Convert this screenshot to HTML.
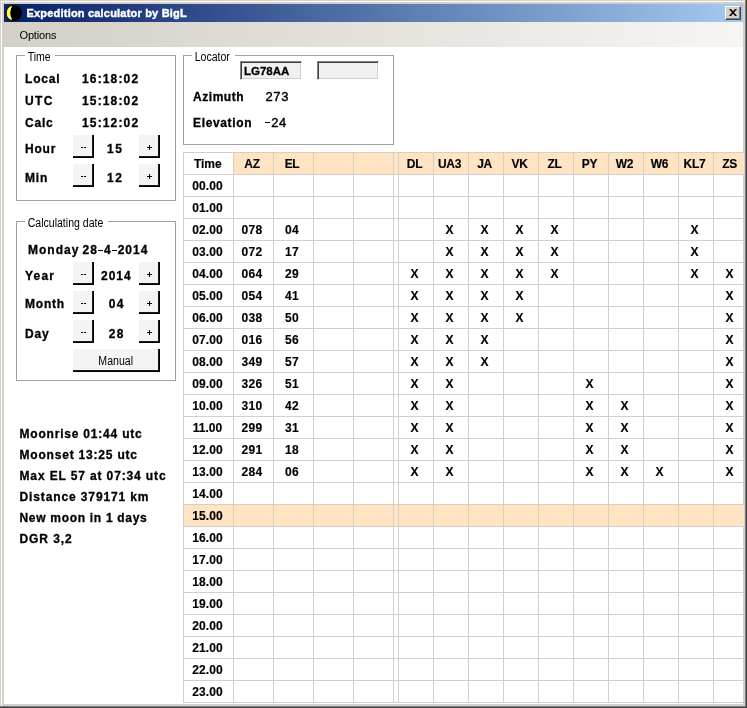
<!DOCTYPE html>
<html><head><meta charset="utf-8"><title>Expedition calculator by BigL</title>
<style>
*{box-sizing:border-box;margin:0;padding:0}
html,body{width:747px;height:708px;overflow:hidden;background:#fff}
body{position:relative;font-family:"Liberation Sans",sans-serif;color:#000}
.abs,.win div,.win span{position:absolute}
.win{position:absolute;left:0;top:0;width:747px;height:708px;background:#d4d0c8;overflow:hidden}
.lay{left:0;top:0;width:747px;height:708px;will-change:transform}
.client{left:4px;top:47px;width:739px;height:657px;background:#fff}
.title{left:4px;top:4px;width:739px;height:18px;background:linear-gradient(90deg,#0a246a 0%,#0a246a 3%,#a6caf0 100%)}
.title .tt{left:22.5px;top:2px;font-weight:bold;font-size:11px;line-height:14px;color:#fff;white-space:nowrap;letter-spacing:0.2px;-webkit-text-stroke:0.4px #fff}
.menu{left:4px;top:22px;width:739px;height:25px;background:linear-gradient(90deg,#d4d0c8 0%,#d5d1c9 5%,#f6f5f3 100%)}
.menu .mi{left:15.5px;top:6px;font-size:11px;line-height:14px;white-space:nowrap;letter-spacing:-0.15px}
.closeb{left:721px;top:2px;width:16px;height:14px;background:#d4d0c8;border:1px solid;border-color:#fff #404040 #404040 #fff;box-shadow:inset -1px -1px 0 #808080}
/* group boxes */
.gb{border:1px solid #a0a0a0}
.cap{background:#fff;font-size:12px;line-height:13px;white-space:nowrap;padding:0 2px;transform:scaleX(0.88);transform-origin:0 0}
.b{font-weight:bold;font-size:12px;line-height:14px;white-space:nowrap;letter-spacing:0.8px;-webkit-text-stroke:0.3px #000}
.n{font-weight:normal;font-size:13px;-webkit-text-stroke:0.4px #000}
.b u{display:inline-block;width:5px;height:1.3px;background:#000;vertical-align:3px;margin-right:1px;text-decoration:none}
.btn{background:#f4f4f4;border-right:1px solid #000;border-bottom:1px solid #000;box-shadow:inset -1px -1px 0 #1a1a1a;font-size:12px;text-align:center}
.btn b{position:absolute;background:#000}
.btn i{display:inline-block;font-style:normal;transform:scaleX(0.88)}
.btn span{position:static !important}
.inp{background:#f0f0f0;border:1px solid;border-color:#808080 #fff #fff #808080;box-shadow:inset 1px 1px 0 #404040, inset -1px -1px 0 #d4d0c8}
/* grid */
.grid{left:183px;top:152px;width:561px;height:551px;overflow:hidden}
.pe{background:#ffe4c4}
.hl{left:0;width:561px;height:1px;background:#d4d0c8}
.vl{top:0;width:1px;height:551px;background:#d4d0c8}
.d{letter-spacing:0.35px}
.d0{letter-spacing:0.05px}
.x{font-size:11.5px}
.h{letter-spacing:-0.3px}
.t{-webkit-text-stroke:0.15px #000;height:21px;line-height:21px;font-size:12px;font-weight:bold;text-align:center;white-space:nowrap}
</style></head><body>
<div class="win"><div class="lay">
 <div style="left:1px;top:1px;width:744px;height:705px;border-left:1px solid #fff;border-top:1px solid #fff"></div>
 <div style="left:0;top:0;width:747px;height:708px;border-right:1px solid #404040;border-bottom:1px solid #404040"></div>
 <div style="left:0;top:0;width:746px;height:707px;border-right:1px solid #808080;border-bottom:1px solid #808080"></div>
 <div class="title">
  <svg style="position:absolute;left:2px;top:1px" width="16" height="16" viewBox="0 0 16 16"><circle cx="8" cy="8" r="8" fill="#000"/><path d="M6.2 0.85 A7.4 7.4 0 0 0 6.2 15.15 A14.4 14.4 0 0 1 6.2 0.85Z" fill="#ffff30"/><path d="M5.2 2.2 A12 12 0 0 0 5.2 13.8" fill="none" stroke="#fff" stroke-width="0.7" opacity="0.7"/></svg>
  <div class="tt">Expedition calculator by BigL</div>
  <div class="closeb"><svg style="position:absolute;left:3px;top:2px" width="8" height="7" viewBox="0 0 8 7"><path d="M0 0h2l2 2.2L6 0h2L5 3.5 8 7H6L4 4.8 2 7H0l3-3.5z" fill="#000"/></svg></div>
 </div>
 <div class="menu"><div class="mi">Options</div></div>
 <div class="client">
 </div>

 <!-- Time group -->
 <div class="gb" style="left:16px;top:55px;width:160px;height:146px"></div>
 <div class="cap" style="left:25px;top:51px;padding:0 5px 0 3px">Time</div>
 <div class="b" style="left:25px;top:72px">Local</div>
 <div class="b" style="left:82px;top:72px;letter-spacing:1.15px">16:18:02</div>
 <div class="b" style="left:25px;top:94px;letter-spacing:1.4px">UTC</div>
 <div class="b" style="left:82px;top:94px;letter-spacing:1.15px">15:18:02</div>
 <div class="b" style="left:25px;top:116px">Calc</div>
 <div class="b" style="left:82px;top:116px;letter-spacing:1.15px">15:12:02</div>
 <div class="b" style="left:25px;top:142px">Hour</div>
 <div class="b" style="left:25px;top:171px">Min</div>
 <div class="btn" style="left:73px;top:135px;width:21px;height:23px;"><b style="left:8px;top:12px;width:2px;height:1px"></b><b style="left:11px;top:12px;width:2px;height:1px"></b></div>
 <div class="b" style="left:107px;top:142px;letter-spacing:1.6px">15</div>
 <div class="btn" style="left:139px;top:135px;width:21px;height:23px;"><b style="left:8px;top:12px;width:5px;height:1px"></b><b style="left:10px;top:10px;width:1px;height:5px"></b></div>
 <div class="btn" style="left:73px;top:164px;width:21px;height:23px;"><b style="left:8px;top:12px;width:2px;height:1px"></b><b style="left:11px;top:12px;width:2px;height:1px"></b></div>
 <div class="b" style="left:107px;top:171px;letter-spacing:1.6px">12</div>
 <div class="btn" style="left:139px;top:164px;width:21px;height:23px;"><b style="left:8px;top:12px;width:5px;height:1px"></b><b style="left:10px;top:10px;width:1px;height:5px"></b></div>

 <!-- Date group -->
 <div class="gb" style="left:16px;top:221px;width:160px;height:160px"></div>
 <div class="cap" style="left:25px;top:217px;padding:0 5px 0 3px">Calculating date</div>
 <div class="b" style="left:28px;top:243px;letter-spacing:1px">Monday <span style="position:static;margin-left:-1.1px">28<u></u>4<u></u>2014</span></div>
 <div class="b" style="left:25px;top:269px;letter-spacing:1.2px">Year</div>
 <div class="b" style="left:25px;top:297px">Month</div>
 <div class="b" style="left:25px;top:327px">Day</div>
 <div class="btn" style="left:73px;top:262px;width:21px;height:23px;"><b style="left:8px;top:12px;width:2px;height:1px"></b><b style="left:11px;top:12px;width:2px;height:1px"></b></div>
 <div class="b" style="left:101px;top:269px;letter-spacing:1px">2014</div>
 <div class="btn" style="left:139px;top:262px;width:21px;height:23px;"><b style="left:8px;top:12px;width:5px;height:1px"></b><b style="left:10px;top:10px;width:1px;height:5px"></b></div>
 <div class="btn" style="left:73px;top:291px;width:21px;height:23px;"><b style="left:8px;top:12px;width:2px;height:1px"></b><b style="left:11px;top:12px;width:2px;height:1px"></b></div>
 <div class="b" style="left:108.7px;top:297px;letter-spacing:1.5px">04</div>
 <div class="btn" style="left:139px;top:291px;width:21px;height:23px;"><b style="left:8px;top:12px;width:5px;height:1px"></b><b style="left:10px;top:10px;width:1px;height:5px"></b></div>
 <div class="btn" style="left:73px;top:320px;width:21px;height:23px;"><b style="left:8px;top:12px;width:2px;height:1px"></b><b style="left:11px;top:12px;width:2px;height:1px"></b></div>
 <div class="b" style="left:108.7px;top:327px;letter-spacing:1.5px">28</div>
 <div class="btn" style="left:139px;top:320px;width:21px;height:23px;"><b style="left:8px;top:12px;width:5px;height:1px"></b><b style="left:10px;top:10px;width:1px;height:5px"></b></div>
 <div class="btn" style="left:73px;top:349px;width:87px;height:23px;line-height:24px"><i>Manual</i></div>

 <!-- info -->
 <div class="b" style="left:19.5px;top:427px">Moonrise 01:44 utc</div>
 <div class="b" style="left:19.5px;top:448px">Moonset 13:25 utc</div>
 <div class="b" style="left:19.5px;top:469px;letter-spacing:0.87px">Max EL 57 at 07:34 utc</div>
 <div class="b" style="left:19.5px;top:490px;letter-spacing:0.88px">Distance 379171 km</div>
 <div class="b" style="left:19.5px;top:511px;letter-spacing:0.7px">New moon in 1 days</div>
 <div class="b" style="left:19.5px;top:532px;letter-spacing:0.93px">DGR 3,2</div>

 <!-- Locator group -->
 <div class="gb" style="left:183px;top:55px;width:211px;height:90px"></div>
 <div class="cap" style="left:192px;top:51px;padding:0 6px 0 3px">Locator</div>
 <div class="inp" style="left:240px;top:61px;width:62px;height:19px"></div>
 <div class="b" style="left:244px;top:64px;font-size:11.5px;letter-spacing:0">LG78AA</div>
 <div class="inp" style="left:317px;top:61px;width:62px;height:19px"></div>
 <div class="b" style="left:193px;top:90px;letter-spacing:0.55px">Azimuth</div>
 <div class="b n" style="left:265.5px;top:90px;letter-spacing:0.6px">273</div>
 <div class="b" style="left:193px;top:116px;letter-spacing:0.65px">Elevation</div>
 <div style="left:265px;top:122px;width:5px;height:1px;background:#000"></div>
 <div class="b n" style="left:264.7px;top:116px;letter-spacing:0.6px"><span style="position:static;display:inline-block;width:5px;height:0;margin-right:1.5px"></span>24</div>

 <div class="grid">
<div class="pe" style="left:50px;top:0;width:511px;height:22px"></div>
<div class="pe" style="left:0;top:352px;width:561px;height:22px"></div>
<div class="hl" style="top:0px"></div>
<div class="hl" style="top:22px"></div>
<div class="hl" style="top:44px"></div>
<div class="hl" style="top:66px"></div>
<div class="hl" style="top:88px"></div>
<div class="hl" style="top:110px"></div>
<div class="hl" style="top:132px"></div>
<div class="hl" style="top:154px"></div>
<div class="hl" style="top:176px"></div>
<div class="hl" style="top:198px"></div>
<div class="hl" style="top:220px"></div>
<div class="hl" style="top:242px"></div>
<div class="hl" style="top:264px"></div>
<div class="hl" style="top:286px"></div>
<div class="hl" style="top:308px"></div>
<div class="hl" style="top:330px"></div>
<div class="hl" style="top:352px"></div>
<div class="hl" style="top:374px"></div>
<div class="hl" style="top:396px"></div>
<div class="hl" style="top:418px"></div>
<div class="hl" style="top:440px"></div>
<div class="hl" style="top:462px"></div>
<div class="hl" style="top:484px"></div>
<div class="hl" style="top:506px"></div>
<div class="hl" style="top:528px"></div>
<div class="hl" style="top:550px"></div>
<div class="vl" style="left:0px"></div>
<div class="vl" style="left:50px"></div>
<div class="vl" style="left:90px"></div>
<div class="vl" style="left:130px"></div>
<div class="vl" style="left:170px"></div>
<div class="vl" style="left:210px"></div>
<div class="vl" style="left:215px"></div>
<div class="vl" style="left:250px"></div>
<div class="vl" style="left:285px"></div>
<div class="vl" style="left:320px"></div>
<div class="vl" style="left:355px"></div>
<div class="vl" style="left:390px"></div>
<div class="vl" style="left:425px"></div>
<div class="vl" style="left:460px"></div>
<div class="vl" style="left:495px"></div>
<div class="vl" style="left:530px"></div>
<div class="vl" style="left:565px"></div>
<div class="t" style="left:0.30000000000000004px;top:2px;width:49px">Time</div>
<div class="t h" style="left:49.5px;top:2px;width:39px">AZ</div>
<div class="t h" style="left:89.5px;top:2px;width:39px">EL</div>
<div class="t h" style="left:214.5px;top:2px;width:34px">DL</div>
<div class="t h" style="left:249.5px;top:2px;width:34px">UA3</div>
<div class="t h" style="left:284.5px;top:2px;width:34px">JA</div>
<div class="t h" style="left:319.5px;top:2px;width:34px">VK</div>
<div class="t h" style="left:354.5px;top:2px;width:34px">ZL</div>
<div class="t h" style="left:389.5px;top:2px;width:34px">PY</div>
<div class="t h" style="left:424.5px;top:2px;width:34px">W2</div>
<div class="t h" style="left:459.5px;top:2px;width:34px">W6</div>
<div class="t h" style="left:494.5px;top:2px;width:34px">KL7</div>
<div class="t h" style="left:529.5px;top:2px;width:34px">ZS</div>
<div class="t d0" style="left:0.0px;top:24px;width:49px">00.00</div>
<div class="t d0" style="left:0.0px;top:46px;width:49px">01.00</div>
<div class="t d0" style="left:0.0px;top:68px;width:49px">02.00</div>
<div class="t d" style="left:49.5px;top:68px;width:39px">078</div>
<div class="t d" style="left:89.5px;top:68px;width:39px">04</div>
<div class="t x" style="left:249.5px;top:68px;width:34px">X</div>
<div class="t x" style="left:284.5px;top:68px;width:34px">X</div>
<div class="t x" style="left:319.5px;top:68px;width:34px">X</div>
<div class="t x" style="left:354.5px;top:68px;width:34px">X</div>
<div class="t x" style="left:494.5px;top:68px;width:34px">X</div>
<div class="t d0" style="left:0.0px;top:90px;width:49px">03.00</div>
<div class="t d" style="left:49.5px;top:90px;width:39px">072</div>
<div class="t d" style="left:89.5px;top:90px;width:39px">17</div>
<div class="t x" style="left:249.5px;top:90px;width:34px">X</div>
<div class="t x" style="left:284.5px;top:90px;width:34px">X</div>
<div class="t x" style="left:319.5px;top:90px;width:34px">X</div>
<div class="t x" style="left:354.5px;top:90px;width:34px">X</div>
<div class="t x" style="left:494.5px;top:90px;width:34px">X</div>
<div class="t d0" style="left:0.0px;top:112px;width:49px">04.00</div>
<div class="t d" style="left:49.5px;top:112px;width:39px">064</div>
<div class="t d" style="left:89.5px;top:112px;width:39px">29</div>
<div class="t x" style="left:214.5px;top:112px;width:34px">X</div>
<div class="t x" style="left:249.5px;top:112px;width:34px">X</div>
<div class="t x" style="left:284.5px;top:112px;width:34px">X</div>
<div class="t x" style="left:319.5px;top:112px;width:34px">X</div>
<div class="t x" style="left:354.5px;top:112px;width:34px">X</div>
<div class="t x" style="left:494.5px;top:112px;width:34px">X</div>
<div class="t x" style="left:529.5px;top:112px;width:34px">X</div>
<div class="t d0" style="left:0.0px;top:134px;width:49px">05.00</div>
<div class="t d" style="left:49.5px;top:134px;width:39px">054</div>
<div class="t d" style="left:89.5px;top:134px;width:39px">41</div>
<div class="t x" style="left:214.5px;top:134px;width:34px">X</div>
<div class="t x" style="left:249.5px;top:134px;width:34px">X</div>
<div class="t x" style="left:284.5px;top:134px;width:34px">X</div>
<div class="t x" style="left:319.5px;top:134px;width:34px">X</div>
<div class="t x" style="left:529.5px;top:134px;width:34px">X</div>
<div class="t d0" style="left:0.0px;top:156px;width:49px">06.00</div>
<div class="t d" style="left:49.5px;top:156px;width:39px">038</div>
<div class="t d" style="left:89.5px;top:156px;width:39px">50</div>
<div class="t x" style="left:214.5px;top:156px;width:34px">X</div>
<div class="t x" style="left:249.5px;top:156px;width:34px">X</div>
<div class="t x" style="left:284.5px;top:156px;width:34px">X</div>
<div class="t x" style="left:319.5px;top:156px;width:34px">X</div>
<div class="t x" style="left:529.5px;top:156px;width:34px">X</div>
<div class="t d0" style="left:0.0px;top:178px;width:49px">07.00</div>
<div class="t d" style="left:49.5px;top:178px;width:39px">016</div>
<div class="t d" style="left:89.5px;top:178px;width:39px">56</div>
<div class="t x" style="left:214.5px;top:178px;width:34px">X</div>
<div class="t x" style="left:249.5px;top:178px;width:34px">X</div>
<div class="t x" style="left:284.5px;top:178px;width:34px">X</div>
<div class="t x" style="left:529.5px;top:178px;width:34px">X</div>
<div class="t d0" style="left:0.0px;top:200px;width:49px">08.00</div>
<div class="t d" style="left:49.5px;top:200px;width:39px">349</div>
<div class="t d" style="left:89.5px;top:200px;width:39px">57</div>
<div class="t x" style="left:214.5px;top:200px;width:34px">X</div>
<div class="t x" style="left:249.5px;top:200px;width:34px">X</div>
<div class="t x" style="left:284.5px;top:200px;width:34px">X</div>
<div class="t x" style="left:529.5px;top:200px;width:34px">X</div>
<div class="t d0" style="left:0.0px;top:222px;width:49px">09.00</div>
<div class="t d" style="left:49.5px;top:222px;width:39px">326</div>
<div class="t d" style="left:89.5px;top:222px;width:39px">51</div>
<div class="t x" style="left:214.5px;top:222px;width:34px">X</div>
<div class="t x" style="left:249.5px;top:222px;width:34px">X</div>
<div class="t x" style="left:389.5px;top:222px;width:34px">X</div>
<div class="t x" style="left:529.5px;top:222px;width:34px">X</div>
<div class="t d0" style="left:0.0px;top:244px;width:49px">10.00</div>
<div class="t d" style="left:49.5px;top:244px;width:39px">310</div>
<div class="t d" style="left:89.5px;top:244px;width:39px">42</div>
<div class="t x" style="left:214.5px;top:244px;width:34px">X</div>
<div class="t x" style="left:249.5px;top:244px;width:34px">X</div>
<div class="t x" style="left:389.5px;top:244px;width:34px">X</div>
<div class="t x" style="left:424.5px;top:244px;width:34px">X</div>
<div class="t x" style="left:529.5px;top:244px;width:34px">X</div>
<div class="t d0" style="left:0.0px;top:266px;width:49px">11.00</div>
<div class="t d" style="left:49.5px;top:266px;width:39px">299</div>
<div class="t d" style="left:89.5px;top:266px;width:39px">31</div>
<div class="t x" style="left:214.5px;top:266px;width:34px">X</div>
<div class="t x" style="left:249.5px;top:266px;width:34px">X</div>
<div class="t x" style="left:389.5px;top:266px;width:34px">X</div>
<div class="t x" style="left:424.5px;top:266px;width:34px">X</div>
<div class="t x" style="left:529.5px;top:266px;width:34px">X</div>
<div class="t d0" style="left:0.0px;top:288px;width:49px">12.00</div>
<div class="t d" style="left:49.5px;top:288px;width:39px">291</div>
<div class="t d" style="left:89.5px;top:288px;width:39px">18</div>
<div class="t x" style="left:214.5px;top:288px;width:34px">X</div>
<div class="t x" style="left:249.5px;top:288px;width:34px">X</div>
<div class="t x" style="left:389.5px;top:288px;width:34px">X</div>
<div class="t x" style="left:424.5px;top:288px;width:34px">X</div>
<div class="t x" style="left:529.5px;top:288px;width:34px">X</div>
<div class="t d0" style="left:0.0px;top:310px;width:49px">13.00</div>
<div class="t d" style="left:49.5px;top:310px;width:39px">284</div>
<div class="t d" style="left:89.5px;top:310px;width:39px">06</div>
<div class="t x" style="left:214.5px;top:310px;width:34px">X</div>
<div class="t x" style="left:249.5px;top:310px;width:34px">X</div>
<div class="t x" style="left:389.5px;top:310px;width:34px">X</div>
<div class="t x" style="left:424.5px;top:310px;width:34px">X</div>
<div class="t x" style="left:459.5px;top:310px;width:34px">X</div>
<div class="t x" style="left:529.5px;top:310px;width:34px">X</div>
<div class="t d0" style="left:0.0px;top:332px;width:49px">14.00</div>
<div class="t d0" style="left:0.0px;top:354px;width:49px">15.00</div>
<div class="t d0" style="left:0.0px;top:376px;width:49px">16.00</div>
<div class="t d0" style="left:0.0px;top:398px;width:49px">17.00</div>
<div class="t d0" style="left:0.0px;top:420px;width:49px">18.00</div>
<div class="t d0" style="left:0.0px;top:442px;width:49px">19.00</div>
<div class="t d0" style="left:0.0px;top:464px;width:49px">20.00</div>
<div class="t d0" style="left:0.0px;top:486px;width:49px">21.00</div>
<div class="t d0" style="left:0.0px;top:508px;width:49px">22.00</div>
<div class="t d0" style="left:0.0px;top:530px;width:49px">23.00</div>
 </div>
</div></div>
</body></html>
